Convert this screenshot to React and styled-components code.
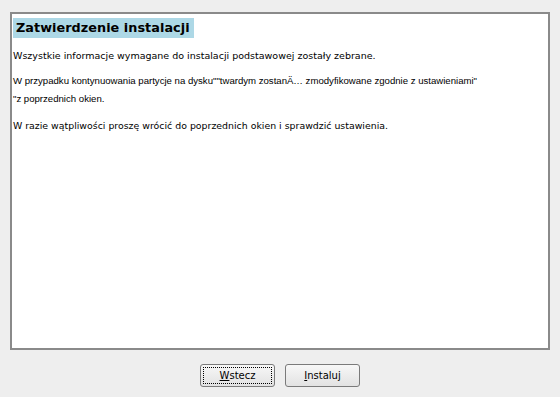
import React from "react";
import styled, { createGlobalStyle } from "styled-components";

const Global = createGlobalStyle`
  html, body { margin: 0; padding: 0; background: #eeeeee; }
  body { font-family: "DejaVu Sans", sans-serif; }
`;

const Window = styled.div`
  width: 560px;
  height: 397px;
  box-sizing: border-box;
  padding: 12px 10px 0 10px;
  display: flex;
  flex-direction: column;
  background: #eeeeee;
`;

const Panel = styled.div`
  height: 338px;
  box-sizing: border-box;
  background: #ffffff;
  border: 2px solid #8a8a8a;
  padding: 3px 0 0 1px;
`;

const Title = styled.h1`
  display: inline-block;
  margin: 0;
  background: #add8e6;
  color: #000;
  font-family: "DejaVu Sans", sans-serif;
  font-weight: bold;
  font-size: 12.8px;
  line-height: 20px;
  padding: 0 4px 0 3px;
  letter-spacing: 0.05px;
`;

const Para = styled.p`
  margin: ${(p) => p.$mt}px 0 0 0;
  font-family: ${(p) => (p.$arial ? '"Liberation Sans", Arial, sans-serif' : '"DejaVu Sans", sans-serif')};
  font-size: ${(p) => p.$size}px;
  line-height: ${(p) => (p.$arial ? 18 : 14)}px;
  color: #000;
  white-space: pre;
`;

const Footer = styled.div`
  display: flex;
  justify-content: center;
  gap: 10px;
  padding-top: 14px;
`;

const Button = styled.button`
  width: 75px;
  height: 23px;
  box-sizing: border-box;
  border: 1px solid #7a7a7a;
  border-radius: 3px;
  background: linear-gradient(#f7f7f7, #e2e2e2);
  font-family: "DejaVu Sans", sans-serif;
  font-size: 10px;
  color: #000;
  padding: 0;
  position: relative;
  display: flex;
  align-items: center;
  justify-content: center;
  u { text-decoration: underline; }
  ${(p) =>
    p.$focused &&
    `
    &::after {
      content: "";
      position: absolute;
      left: 2px; top: 2px; right: 2px; bottom: 2px;
      border: 1px dotted #000;
    }
  `}
`;

export default function App() {
  return (
    <>
      <Global />
      <Window>
        <Panel>
          <Title>Zatwierdzenie instalacji</Title>
          <Para $size={9.5} $mt={11}>Wszystkie informacje wymagane do instalacji podstawowej zostały zebrane.</Para>
          <Para $arial $size={9.6} $mt={9}>{'W przypadku kontynuowania partycje na dysku""twardym zostanÄ… zmodyfikowane zgodnie z ustawieniami"'}</Para>
          <Para $arial $size={9.6} $mt={0}>{'"z poprzednich okien.'}</Para>
          <Para $size={9.4} $mt={11}>W razie wątpliwości proszę wrócić do poprzednich okien i sprawdzić ustawienia.</Para>
        </Panel>
        <Footer>
          <Button $focused>
            <span><u>W</u>stecz</span>
          </Button>
          <Button>
            <span><u>I</u>nstaluj</span>
          </Button>
        </Footer>
      </Window>
    </>
  );
}
